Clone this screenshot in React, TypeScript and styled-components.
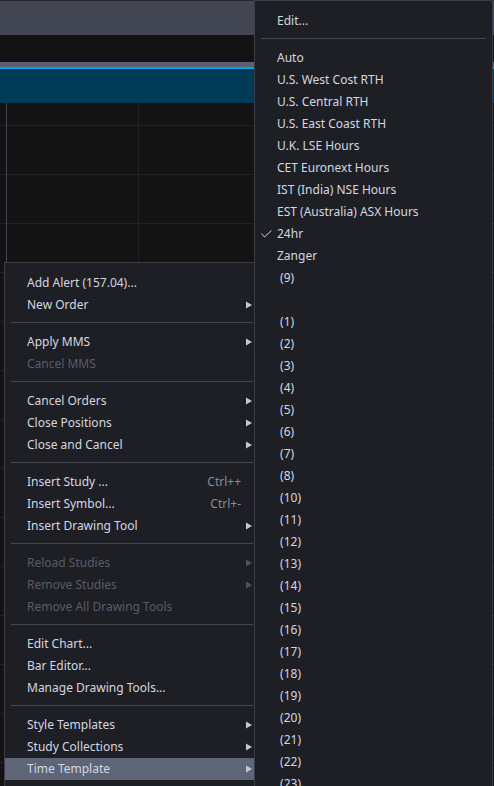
import React from "react";
import styled, { createGlobalStyle } from "styled-components";

const Global = createGlobalStyle`
  html, body { margin: 0; padding: 0; background: #131313; overflow: hidden; }
  #root { width: 494px; height: 786px; }
`;

const Page = styled.div`
  position: relative;
  width: 494px;
  height: 786px;
  overflow: hidden;
  display: flex;
  flex-direction: column;
  background: #131313;
  font-family: "Noto Sans", "Open Sans", sans-serif;
`;

const TopEdge = styled.div`
  height: 1px;
  background: #26282e;
`;
const Toolbar = styled.div`
  height: 34px;
  background: #424652;
`;
const DarkStrip = styled.div`
  height: 27px;
  background: #131313;
`;
const GrayStrip = styled.div`
  height: 5px;
  background: #5c606f;
`;
const BlueLine = styled.div`
  height: 2px;
  background: #00a3ef;
`;
const TealBand = styled.div`
  height: 34px;
  background: #013a56;
`;
const Chart = styled.div`
  flex: 1;
  background-color: #131313;
  background-image:
    linear-gradient(to right, #454856 1px, transparent 1px),
    linear-gradient(to right, #222226 1px, transparent 1px),
    linear-gradient(to bottom, #222226 1px, transparent 1px);
  background-size: 1px 100%, 1px 100%, 100% 49px;
  background-position: 6px 0, 138px 0, 0 22px;
  background-repeat: no-repeat, no-repeat, repeat-y;
`;

const Menu = styled.div<{ $left: number; $top: number; $width: number; $z: number }>`
  position: absolute;
  left: ${(p) => p.$left}px;
  top: ${(p) => p.$top}px;
  width: ${(p) => p.$width}px;
  z-index: ${(p) => p.$z};
  box-sizing: border-box;
  background: #1e1f24;
  border: 1px solid #3b3e49;
  padding: 9px 0 8px;
  display: flex;
  flex-direction: column;
`;

const Row = styled.div<{ $disabled?: boolean; $active?: boolean }>`
  position: relative;
  height: 22px;
  display: flex;
  align-items: center;
  padding: 0 7px 0 22px;
  font-size: 12px;
  line-height: 22px;
  white-space: pre;
  color: ${(p) => (p.$disabled ? "#585c68" : "#d3d7e1")};
  background: ${(p) => (p.$active ? "#5d6577" : "transparent")};
`;

const Label = styled.span`
  flex: 1;
`;

const Shortcut = styled.span`
  color: #878b96;
  margin-right: 11px;
`;

const Arrow = styled.svg`
  width: 6px;
  height: 8px;
  flex: none;
`;

const Check = styled.svg`
  position: absolute;
  left: 6px;
  top: 7px;
  width: 11px;
  height: 8px;
`;

const Sep = styled.div`
  height: 1px;
  margin: 6px 6px 8px;
  background: #45474f;
`;

type Item =
  | "sep"
  | {
      label: string;
      arrow?: boolean;
      disabled?: boolean;
      shortcut?: string;
      active?: boolean;
      checked?: boolean;
    };

const leftItems: Item[] = [
  { label: "Add Alert (157.04)..." },
  { label: "New Order", arrow: true },
  "sep",
  { label: "Apply MMS", arrow: true },
  { label: "Cancel MMS", disabled: true },
  "sep",
  { label: "Cancel Orders", arrow: true },
  { label: "Close Positions", arrow: true },
  { label: "Close and Cancel", arrow: true },
  "sep",
  { label: "Insert Study ...", shortcut: "Ctrl++" },
  { label: "Insert Symbol...", shortcut: "Ctrl+-" },
  { label: "Insert Drawing Tool", arrow: true },
  "sep",
  { label: "Reload Studies", arrow: true, disabled: true },
  { label: "Remove Studies", arrow: true, disabled: true },
  { label: "Remove All Drawing Tools", disabled: true },
  "sep",
  { label: "Edit Chart..." },
  { label: "Bar Editor..." },
  { label: "Manage Drawing Tools..." },
  "sep",
  { label: "Style Templates", arrow: true },
  { label: "Study Collections", arrow: true },
  { label: "Time Template", arrow: true, active: true },
];

const nums = [1, 2, 3, 4, 5, 6, 7, 8, 10, 11, 12, 13, 14, 15, 16, 17, 18, 19, 20, 21, 22, 23, 24, 25];

const rightItems: Item[] = [
  { label: "Edit..." },
  "sep",
  { label: "Auto" },
  { label: "U.S. West Cost RTH" },
  { label: "U.S. Central RTH" },
  { label: "U.S. East Coast RTH" },
  { label: "U.K. LSE Hours" },
  { label: "CET Euronext Hours" },
  { label: "IST (India) NSE Hours" },
  { label: "EST (Australia) ASX Hours" },
  { label: "24hr", checked: true },
  { label: "Zanger" },
  { label: " (9)" },
  { label: "" },
  ...nums.map((n) => ({ label: ` (${n})` })),
];

function MenuList({ items }: { items: Item[] }) {
  return (
    <>
      {items.map((it, i) =>
        it === "sep" ? (
          <Sep key={i} />
        ) : (
          <Row key={i} $disabled={it.disabled} $active={it.active}>
            {it.checked && (
              <Check viewBox="0 0 11 8">
                <polyline points="0.5,3.5 3.5,7 10.5,0.5" fill="none" stroke="#c8ccd6" strokeWidth="1" />
              </Check>
            )}
            <Label>{it.label}</Label>
            {it.shortcut && <Shortcut>{it.shortcut}</Shortcut>}
            {it.arrow && (
              <Arrow viewBox="0 0 6 8">
                <polygon points="0,0.5 6,4 0,7.5" fill={it.disabled ? "#4f535e" : "#c4c8d2"} />
              </Arrow>
            )}
          </Row>
        )
      )}
    </>
  );
}

export default function App() {
  return (
    <>
      <Global />
      <Page>
        <TopEdge />
        <Toolbar />
        <DarkStrip />
        <GrayStrip />
        <BlueLine />
        <TealBand />
        <Chart />
        <Menu $left={4} $top={262} $width={256} $z={1}>
          <MenuList items={leftItems} />
        </Menu>
        <Menu $left={254} $top={0} $width={239} $z={2}>
          <MenuList items={rightItems} />
        </Menu>
      </Page>
    </>
  );
}
